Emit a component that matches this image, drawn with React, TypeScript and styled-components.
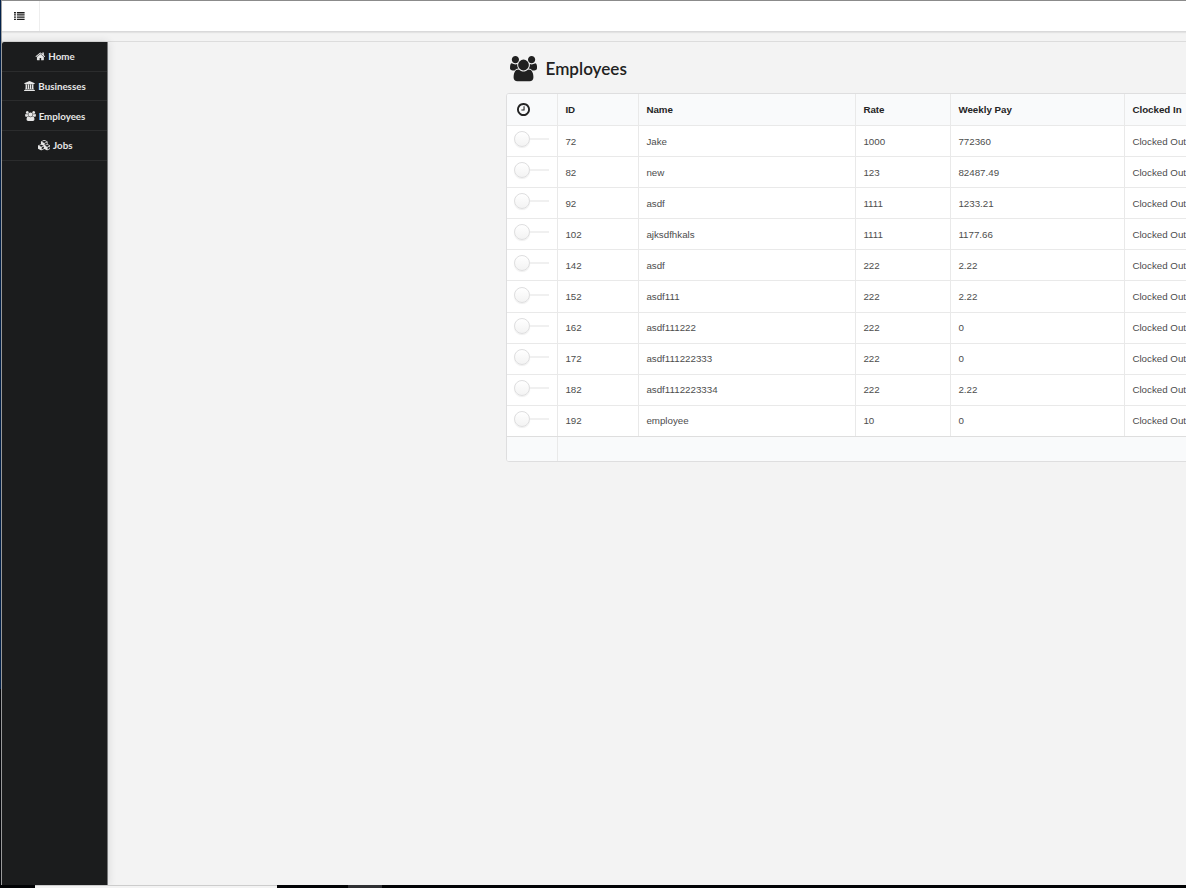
import React from "react";
import styled, { createGlobalStyle } from "styled-components";

const GlobalStyle = createGlobalStyle`
  *, *::before, *::after { box-sizing: border-box; }
  body {
    margin: 0;
    overflow: hidden;
    background: #f3f3f3;
    font-family: Lato, "Liberation Sans", sans-serif;
  }
`;

const Frame = styled.div`
  display: flex;
  flex-direction: column;
  width: 1186px;
  height: 888px;
  overflow: hidden;
`;

const Browser = styled.div`
  display: flex;
  height: 885px;
`;

const WindowEdge = styled.div`
  flex: none;
  width: 1px;
  background: linear-gradient(#03214a 0 689px, #05070b 689px);
`;

const Page = styled.div`
  display: flex;
  flex-direction: column;
  flex: 1;
  min-width: 0;
  border-top: 1px solid #8b8b8b;
  border-left: 1px solid #a3a3a3;
  background: #f3f3f3;
`;

const TopBar = styled.header`
  display: flex;
  flex: none;
  height: 31px;
  background: #fff;
  border-bottom: 1px solid #d9d9da;
  box-shadow: 0 1px 1px rgba(34, 36, 38, 0.08);
`;

const MenuButton = styled.button`
  display: flex;
  align-items: center;
  width: 38px;
  padding: 0 0 0 12px;
  border: 0;
  border-right: 1px solid #eeeeee;
  background: none;
  color: #1c1c1c;
`;

const Body = styled.div`
  display: flex;
  flex: 1;
  margin-top: 9px;
  min-height: 0;
  border-top: 1px solid #dcdcdc;
`;

const Sidebar = styled.nav`
  flex: none;
  width: 106px;
  background: #1b1c1d;
  border-top-left-radius: 2px;
  border-right: 1px solid #77787a;
  box-shadow: 0 0 9px rgba(34, 36, 38, 0.15);
`;

const SideItem = styled.a`
  display: flex;
  align-items: center;
  justify-content: center;
  gap: 3px;
  height: 29.7px;
  padding-left: 1px;
  border-bottom: 1px solid #2b2c2d;
  color: #e6e6e6;
  font-size: 9.75px;
  font-weight: 700;
  line-height: 10px;
`;

const Content = styled.main`
  flex: 1;
  min-width: 0;
  padding-left: 398px;
  overflow: hidden;
`;

const Title = styled.h2`
  display: flex;
  align-items: center;
  gap: 9px;
  height: 51px;
  margin: 0;
  padding: 3px 0 0 3.5px;
  color: #212121;
  font-size: 17.1px;
  font-weight: 600;
  line-height: 20px;
`;

const Table = styled.div`
  width: 760px;
  border: 1px solid #dededf;
  border-radius: 3px;
  background: #fff;
  color: #4d4d4d;
  font-family: "Liberation Sans", Arial, sans-serif;
  font-size: 9.75px;
  overflow: hidden;
`;

const rowHeight = { head: "31px", body: "31.1px", foot: "25px" };

const Row = styled.div<{ $kind?: "head" | "foot" }>`
  display: grid;
  grid-template-columns: 50px 81px 217px 95px 174px 1fr;
  height: ${(p) => rowHeight[p.$kind ?? "body"]};
  border-top: ${(p) => (p.$kind === "head" ? "0" : `1px solid ${p.$kind === "foot" ? "#dedede" : "#e9e9e9"}`)};
  background: ${(p) => (p.$kind ? "#f9fafb" : "#fff")};
  color: ${(p) => (p.$kind ? "#242424" : "inherit")};
  font-weight: ${(p) => (p.$kind ? 700 : 400)};
`;

const Cell = styled.div`
  display: flex;
  align-items: center;
  padding: 0 0 0 8px;
  white-space: nowrap;
  & + & {
    border-left: 1px solid #e9e9e9;
    padding-left: 7.4px;
  }
`;

const FootCell = styled(Cell)`
  grid-column: 2 / -1;
  border-left: 1px solid #e9e9e9;
`;

const IconCell = styled(Cell)`
  padding: 0 0 0 9.5px;
`;

const ToggleCell = styled(Cell)`
  padding: 0 0 4px 7px;
`;

const Toggle = styled.span`
  display: flex;
  align-items: center;
  width: 35px;
  height: 16px;
`;

const Knob = styled.span`
  flex: none;
  width: 16px;
  height: 16px;
  border: 1px solid #dededf;
  border-radius: 50%;
  background: linear-gradient(#fff, #f3f3f3);
  box-shadow: 0 1px 1px rgba(34, 36, 38, 0.08);
`;

const Track = styled.span`
  flex: 1;
  height: 2px;
  background: #f0f0f0;
`;

const Taskbar = styled.div`
  display: flex;
  height: 3px;
  background: #020305;
`;

const TaskSearch = styled.div`
  width: 242px;
  margin-left: 35px;
  border-top: 1px solid #cccccc;
  background: #f3f3f3;
`;

const TaskButton = styled.div`
  width: 34px;
  margin-left: 71px;
  background: #2f3033;
`;

type GlyphProps = { w: number; h: number; box: string; d: string };

const Glyph = ({ w, h, box, d }: GlyphProps) => (
  <svg width={w} height={h} viewBox={box} fill="currentColor" aria-hidden>
    <path d={d} />
  </svg>
);

const HOME =
  "M1472 992v480q0 26-19 45t-45 19h-384v-384h-256v384h-384q-26 0-45-19t-19-45v-480q0-1 .5-3t.5-3l575-474 575 474q1 2 1 6zm223-69l-62 74q-8 9-21 11h-3q-13 0-21-7l-692-577-692 577q-12 8-24 7-13-2-21-11l-62-74q-8-10-7-23.5t11-21.5l719-599q32-26 76-26t76 26l244 204v-195q0-14 9-23t23-9h192q14 0 23 9t9 23v408l219 182q10 8 11 21.5t-7 23.5z";
const BANK =
  "M960 0l960 384v128h-128q0 26-20.5 45t-48.5 19h-1526q-28 0-48.5-19t-20.5-45h-128v-128zm-704 640h256v768h128v-768h256v768h128v-768h256v768h128v-768h256v768h59q28 0 48.5 19t20.5 45v64h-1664v-64q0-26 20.5-45t48.5-19h59v-768zm1595 960q28 0 48.5 19t20.5 45v128h-1920v-128q0-26 20.5-45t48.5-19h1782z";
const USERS =
  "M593 640q-162 5-265 128h-134q-82 0-138-40.5t-56-118.5q0-353 124-353 6 0 43.5 21t97.5 42.5 119 21.5q67 0 133-23-5 37-5 66 0 159 90 256zm1071 637q0 120-73 189.5t-194 69.5h-874q-121 0-194-69.5t-73-189.5q0-53 3.5-103.5t14-109 26.5-108.5 43-97.5 62-81 85.5-53.5 111.5-20q10 0 43 21.5t73 48 107 48 135 21.5 135-21.5 107-48 73-48 43-21.5q61 0 111.5 20t85.5 53.5 62 81 43 97.5 26.5 108.5 14 109 3.5 103.5zm-1024-1277q0 106-75 181t-181 75-181-75-75-181 75-181 181-75 181 75 75 181zm704 384q0 159-112.5 271.5t-271.5 112.5-271.5-112.5-112.5-271.5 112.5-271.5 271.5-112.5 271.5 112.5 112.5 271.5zm576 225q0 78-56 118.5t-138 40.5h-134q-103-123-265-128 90-97 90-256 0-29-5-66 66 23 133 23 59 0 119-21.5t97.5-42.5 43.5-21q124 0 124 353zm-128-609q0 106-75 181t-181 75-181-75-75-181 75-181 181-75 181 75 75 181z";
const CUBES =
  "M640 1632l384-192v-314l-384 164v342zm-64-454l404-173-404-173-404 173zm1088 454l384-192v-314l-384 164v342zm-64-454l404-173-404-173-404 173zm-448-293l384-165v-266l-384 164v267zm-64-379l441-189-441-189-441 189zm1088 518v416q0 36-19 67t-52 47l-448 224q-25 14-57 14t-57-14l-448-224q-5-2-7-4-2 2-7 4l-448 224q-25 14-57 14t-57-14l-448-224q-33-16-52-47t-19-67v-416q0-38 21.5-70t56.5-48l434-186v-400q0-38 21.5-70t56.5-48l448-192q23-10 50-10t50 10l448 192q35 16 56.5 48t21.5 70v400l434 186q36 16 57 48t21 70z";
const CLOCK =
  "M1024 544v448q0 14-9 23t-23 9h-320q-14 0-23-9t-9-23v-64q0-14 9-23t23-9h224v-352q0-14 9-23t23-9h64q14 0 23 9t9 23zm416 352q0-148-73-273t-198-198-273-73-273 73-198 198-73 273 73 273 198 198 273 73 273-73 198-198 73-273zm224 0q0 209-103 385.5t-279.5 279.5-385.5 103-385.5-103-279.5-279.5-103-385.5 103-385.5 279.5-279.5 385.5-103 385.5 103 279.5 279.5 103 385.5z";
const LIST =
  "M0 0h2v1.5H0zM3 0h8v1.5H3zM0 2.3h2v1.4H0zM3 2.3h8v1.4H3zM0 4.6h2v1.4H0zM3 4.6h8v1.4H3zM0 6.9h2v1.4H0zM3 6.9h8v1.4H3z";

const USERS_BOX = "0 -256 1920 1792";

const employees = [
  ["72", "Jake", "1000", "772360"],
  ["82", "new", "123", "82487.49"],
  ["92", "asdf", "1111", "1233.21"],
  ["102", "ajksdfhkals", "1111", "1177.66"],
  ["142", "asdf", "222", "2.22"],
  ["152", "asdf111", "222", "2.22"],
  ["162", "asdf111222", "222", "0"],
  ["172", "asdf111222333", "222", "0"],
  ["182", "asdf1112223334", "222", "2.22"],
  ["192", "employee", "10", "0"],
];

export default function App() {
  return (
    <>
      <GlobalStyle />
      <Frame>
        <Browser>
          <WindowEdge />
          <Page>
            <TopBar>
              <MenuButton aria-label="Toggle menu">
                <Glyph w={10.6} h={8} box="0 0 11 8.3" d={LIST} />
              </MenuButton>
            </TopBar>
            <Body>
              <Sidebar>
                <SideItem>
                  <Glyph w={10} h={10} box="0 0 1664 1664" d={HOME} />
                  Home
                </SideItem>
                <SideItem>
                  <Glyph w={11} h={10} box="0 0 1920 1792" d={BANK} />
                  Businesses
                </SideItem>
                <SideItem>
                  <Glyph w={11} h={10} box={USERS_BOX} d={USERS} />
                  Employees
                </SideItem>
                <SideItem>
                  <Glyph w={12.5} h={10.3} box="0 0 2176 1792" d={CUBES} />
                  Jobs
                </SideItem>
              </Sidebar>
              <Content>
                <Title>
                  <Glyph w={27} h={25.2} box={USERS_BOX} d={USERS} />
                  Employees
                </Title>
                <Table>
                  <Row $kind="head">
                    <IconCell>
                      <Glyph w={13} h={13} box="128 128 1536 1536" d={CLOCK} />
                    </IconCell>
                    <FirstHead>ID</FirstHead>
                    <Cell>Name</Cell>
                    <Cell>Rate</Cell>
                    <Cell>Weekly Pay</Cell>
                    <Cell>Clocked In</Cell>
                  </Row>
                  {employees.map(([id, name, rate, pay]) => (
                    <Row key={id}>
                      <ToggleCell>
                        <Toggle>
                          <Knob />
                          <Track />
                        </Toggle>
                      </ToggleCell>
                      <Cell>{id}</Cell>
                      <Cell>{name}</Cell>
                      <Cell>{rate}</Cell>
                      <Cell>{pay}</Cell>
                      <Cell>Clocked Out</Cell>
                    </Row>
                  ))}
                  <Row $kind="foot">
                    <Cell />
                    <FootCell />
                  </Row>
                </Table>
              </Content>
            </Body>
          </Page>
        </Browser>
        <Taskbar>
          <TaskSearch />
          <TaskButton />
        </Taskbar>
      </Frame>
    </>
  );
}

const FirstHead = styled(Cell)`
  border-left: 1px solid #e9e9e9;
`;
